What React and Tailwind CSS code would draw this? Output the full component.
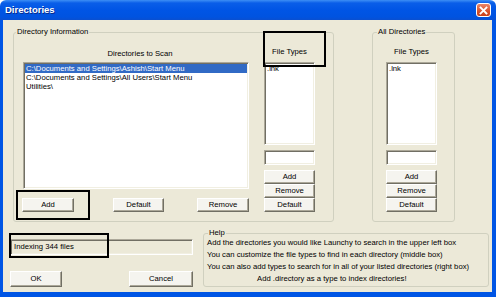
const sunken =
  "border border-t-[#aca899] border-l-[#aca899] border-b-white border-r-white shadow-[inset_1px_1px_0_#716f64,inset_-1px_-1px_0_#f1efe2]";
const btn =
  "flex items-center justify-center bg-[#f5f4ef] border border-t-white border-l-white border-b-[#716f64] border-r-[#716f64] shadow-[inset_-1px_-1px_0_#aca899] leading-none";

function Btn({ className = "", children }) {
  return <div className={`${btn} ${className}`}>{children}</div>;
}

function Group({ label, labelClass = "", className = "", children }) {
  return (
    <div className={`border border-[#d0d0bf] rounded-[3px] ${className}`}>
      <span className={`block w-fit -mt-[6px] px-[1px] bg-[#ece9d8] leading-[10px] ${labelClass}`}>
        {label}
      </span>
      {children}
    </div>
  );
}

function TypesColumn() {
  return (
    <div className="flex flex-col w-[51px]">
      <div className="mt-[10px] h-[10px] leading-[10px] text-center">File Types</div>
      <div className={`mt-[5px] h-[83px] bg-white ${sunken} px-[2px] pt-[1px] leading-[9px]`}>.lnk</div>
      <div className={`mt-[5px] h-[15px] bg-white ${sunken}`} />
      <div className="mt-[5px] flex flex-col">
        <Btn className="h-[14px]">Add</Btn>
        <Btn className="h-[14px]">Remove</Btn>
        <Btn className="h-[14px]">Default</Btn>
      </div>
    </div>
  );
}

export default function App() {
  return (
    <div className="relative w-[496px] h-[297px] overflow-hidden flex flex-col text-[7.7px] text-black font-['Liberation_Sans',Arial,sans-serif]">
      {/* Title bar */}
      <div className="h-[20px] flex items-center justify-between pl-[5px] pr-[5px] rounded-t-[6px] bg-[linear-gradient(to_bottom,#3d8ff5_0%,#0a5ee8_15%,#0055e5_50%,#0053e0_85%,#0a4fd0_100%)]">
        <span className="text-white font-bold text-[9.5px] [text-shadow:1px_1px_0_#0a2a8a]">Directories</span>
        <div className="w-[15px] h-[14px] rounded-[3px] border border-white bg-[linear-gradient(to_bottom,#e9866a,#d9522b_60%,#c8401a)] flex items-center justify-center">
          <svg width="9" height="9" viewBox="0 0 9 9">
            <path d="M1.5 1.5 L7.5 7.5 M7.5 1.5 L1.5 7.5" stroke="white" strokeWidth="1.8" strokeLinecap="square" />
          </svg>
        </div>
      </div>

      {/* Frame + body */}
      <div className="flex-1 bg-[#0055e5] pl-[3px] pr-[4px] pb-[5px] flex">
        <div className="flex-1 bg-[#ece9d8] flex flex-col">
          {/* Top row */}
          <div className="mt-[12px] flex">
            <Group label="Directory Information" labelClass="ml-[2px]" className="ml-[10px] w-[321px] h-[190px]">
              <div className="flex">
                <div className="ml-[8px] w-[227px] flex flex-col">
                  <div className="mt-[12px] h-[10px] leading-[10px] text-center pl-[9px]">Directories to Scan</div>
                  <div className={`ml-[1px] mt-[3px] w-[226px] h-[127px] bg-white ${sunken} pt-[1px] px-[1px] leading-[9px]`}>
                    <div className="bg-[#316ac5] text-white pl-[1px] h-[9px]">C:\Documents and Settings\Ashish\Start Menu</div>
                    <div className="pl-[1px] h-[9px]">C:\Documents and Settings\All Users\Start Menu</div>
                    <div className="pl-[1px] h-[9px]">Utilities\</div>
                  </div>
                  <div className="mt-[9px] flex">
                    <Btn className="w-[52px] h-[14px]">Add</Btn>
                    <Btn className="ml-[39px] w-[51px] h-[14px]">Default</Btn>
                    <Btn className="ml-[33px] w-[52px] h-[14px]">Remove</Btn>
                  </div>
                </div>
                <div className="ml-[15px]">
                  <TypesColumn />
                </div>
              </div>
            </Group>

            <Group label="All Directories" labelClass="ml-[4px]" className="ml-[38px] w-[83px] h-[190px]">
              <div className="ml-[13px]">
                <TypesColumn />
              </div>
            </Group>
          </div>

          {/* Bottom row */}
          <div className="mt-[11px] flex">
            <div className="ml-[7px] w-[183px] flex flex-col">
              <div className={`mt-[6px] h-[16px] ${sunken} flex items-center pl-[3px]`}>Indexing 344 files</div>
              <div className="mt-[16px] flex justify-between">
                <Btn className="w-[52px] h-[16px]">OK</Btn>
                <Btn className="w-[64px] h-[16px]">Cancel</Btn>
              </div>
            </div>
            <Group label="Help" labelClass="ml-[4px]" className="ml-[10px] w-[286px] h-[54px]">
              <div className="pl-[3px] leading-[12px] -mt-[1px]">
                <div>Add the directories you would like Launchy to search in the upper left box</div>
                <div>You can customize the file types to find in each directory (middle box)</div>
                <div>You can also add types to search for in all of your listed directories (right box)</div>
                <div className="pl-[50px]">Add .directory as a type to index directories!</div>
              </div>
            </Group>
          </div>
        </div>
      </div>

      {/* Annotation boxes drawn over the dialog */}
      <div className="absolute left-[263px] top-[31px] w-[63px] h-[36px] border-2 border-black pointer-events-none" />
      <div className="absolute left-[16px] top-[190px] w-[74px] h-[30px] border-2 border-black pointer-events-none" />
      <div className="absolute left-[9px] top-[233px] w-[100px] h-[25px] border-2 border-black pointer-events-none" />
    </div>
  );
}
